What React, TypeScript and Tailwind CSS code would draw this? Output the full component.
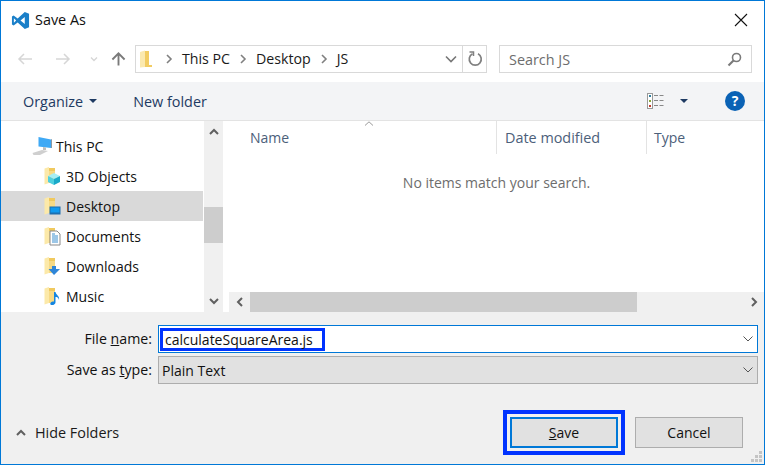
import React from "react";

const font = "font-['Open_Sans','Noto_Sans',sans-serif]";

function Folder({ children }: { children?: React.ReactNode }) {
  return (
    <svg width="18" height="20" viewBox="0 0 18 20" className="shrink-0">
      <path d="M5 2 L11 2 L11 17 L5 17 Z" fill="#f0c95e" />
      <path d="M0.5 2.5 L5 1 L5 17 L0.5 18.5 Z" fill="#fce9a9" />
      <path d="M5 5 L11 5 L11 17 L5 17 Z" fill="#f7da85" />
      {children}
    </svg>
  );
}

const treeIcons: Record<string, React.ReactNode> = {
  "3D Objects": (
    <>
      <path d="M4 10 L10 7 L16 10 L10 13 Z" fill="#a6eef4" />
      <path d="M4 10 L10 13 L10 19 L4 16 Z" fill="#4fd0df" />
      <path d="M16 10 L10 13 L10 19 L16 16 Z" fill="#1aa9c9" />
    </>
  ),
  Desktop: (
    <>
      <rect x="5.5" y="10.5" width="11" height="8" fill="#1c6fb0" />
      <rect x="6.5" y="11.5" width="9" height="5" fill="#0f9af0" />
    </>
  ),
  Documents: (
    <>
      <path d="M6 5 L13 5 L16 8 L16 19 L6 19 Z" fill="#fff" stroke="#8a8a8a" />
      <path d="M8 8h3M8 10h6M8 12h6M8 14h6M8 16h6" stroke="#3a8fd0" strokeWidth="1" />
    </>
  ),
  Downloads: <path d="M8 10 L12 10 L12 13 L16 13 L10 19 L4.5 13 L8 13 Z" fill="#2f86d8" />,
  Music: (
    <path d="M10 6 L11.5 6 C12 9 16 10 15 14 C14.5 11.5 13 11 11.5 11 L11.5 16.5 C11.5 18.5 8 20 6.5 18.5 C5.5 17 8 15 10 15.5 Z" fill="#1485e0" />
  ),
};

function TreeRow({ label, selected }: { label: string; selected?: boolean }) {
  return (
    <div className={`flex h-[30px] items-center pl-[43px] ${selected ? "bg-[#d9d9d9]" : ""}`}>
      <Folder>{treeIcons[label]}</Folder>
      <span className="ml-[4px] text-[14px] text-[#111]">{label}</span>
    </div>
  );
}

function Chevron({ dir, className }: { dir: "up" | "down" | "left" | "right"; className?: string }) {
  const d = {
    up: "M2 8 L6 4 L10 8",
    down: "M2 4 L6 8 L10 4",
    left: "M8 2 L4 6 L8 10",
    right: "M4 2 L8 6 L4 10",
  }[dir];
  return (
    <svg width="12" height="12" viewBox="0 0 12 12" className={className}>
      <path d={d} fill="none" stroke="#606060" strokeWidth="2" />
    </svg>
  );
}

function Crumb({ label }: { label: string }) {
  return (
    <>
      <svg width="8" height="10" viewBox="0 0 8 10" className="shrink-0">
        <path d="M2 1 L6 5 L2 9" fill="none" stroke="#808080" strokeWidth="1.6" />
      </svg>
      <span className="text-[14.2px] text-[#1a1a1a]">{label}</span>
    </>
  );
}

function ThinDown() {
  return (
    <svg width="12" height="8" viewBox="0 0 12 8" className="shrink-0">
      <path d="M1.5 1.5 L6 6 L10.5 1.5" fill="none" stroke="#555" strokeWidth="1" />
    </svg>
  );
}

export default function App() {
  return (
    <div className={`${font} relative flex h-[465px] w-[765px] flex-col overflow-hidden border border-[#0078d7] bg-white`}>
      {/* title bar */}
      <div className="flex h-[38px] shrink-0 items-center pl-[10px] pr-[16px]">
        <svg width="19" height="19" viewBox="0 0 20 20" className="shrink-0">
          <path d="M14.5 1 L19 3 L19 17 L14.5 19 L7 12 L2.8 15.2 L1 14.2 L1 5.8 L2.8 4.8 L7 8 Z" fill="#1a7fc8" />
          <path d="M14.5 6.3 L10 10 L14.5 13.7 Z" fill="#fff" />
          <path d="M3 7.6 L3 12.4 L5.4 10 Z" fill="#fff" />
        </svg>
        <span className="ml-[5px] text-[14.4px] text-[#111]">Save As</span>
        <svg width="14" height="14" viewBox="0 0 14 14" className="ml-auto">
          <path d="M1 1 L13 13 M13 1 L1 13" stroke="#111" strokeWidth="1.1" />
        </svg>
      </div>

      {/* nav row */}
      <div className="mt-[6px] flex h-[28px] shrink-0 items-center">
        <div className="flex w-[134px] shrink-0 items-center pl-[16px]">
          <svg width="15" height="12" viewBox="0 0 15 12">
            <path d="M15 6 L2 6 M7 1 L2 6 L7 11" fill="none" stroke="#d6d6d6" strokeWidth="1.5" />
          </svg>
          <svg width="15" height="12" viewBox="0 0 15 12" className="ml-[24px]">
            <path d="M0 6 L13 6 M8 1 L13 6 L8 11" fill="none" stroke="#d6d6d6" strokeWidth="1.5" />
          </svg>
          <svg width="8" height="6" viewBox="0 0 10 8" className="ml-[19px]">
            <path d="M1 2 L5 6 L9 2" fill="none" stroke="#d6d6d6" strokeWidth="1.8" />
          </svg>
          <svg width="15" height="16" viewBox="0 0 16 16" className="ml-[13px]">
            <path d="M8 15 L8 2 M1.5 8.5 L8 2 L14.5 8.5" fill="none" stroke="#7a7a7a" strokeWidth="2" />
          </svg>
        </div>
        <div className="flex h-full w-[352px] shrink-0 items-center border-[1.5px] border-[#d9d9d9] pl-[4px]">
          <svg width="14" height="18" viewBox="0 0 14 18" className="shrink-0">
            <path d="M0 2 L5 0.5 L5 17 L0 17.5 Z" fill="#fbe9ae" />
            <path d="M5 1 L9 1 L9 15 L12 15 L12 17 L5 17 Z" fill="#f2cc62" />
          </svg>
          <div className="ml-[11px] flex items-center gap-[9px]">
            <Crumb label="This PC" />
            <Crumb label="Desktop" />
            <Crumb label="JS" />
          </div>
          <svg width="12" height="8" viewBox="0 0 12 8" className="ml-auto mr-[5px]">
            <path d="M1 1.5 L6 6.5 L11 1.5" fill="none" stroke="#777" strokeWidth="1.6" />
          </svg>
          <div className="flex h-full w-[24px] shrink-0 items-center justify-center border-l border-[#d9d9d9]">
            <svg width="16" height="16" viewBox="0 0 16 16">
              <path d="M5.5 2.8 A6 6 0 1 0 11 2.8" fill="none" stroke="#808080" strokeWidth="1.7" />
              <path d="M2.5 1 L6.5 1 L6.5 5" fill="none" stroke="#808080" strokeWidth="1.5" />
            </svg>
          </div>
        </div>
        <div className="ml-[12px] flex h-full w-[253px] shrink-0 items-center justify-between border-[1.5px] border-[#d9d9d9] pl-[9px] pr-[9px]">
          <span className="pt-[1px] text-[14.4px] text-[#6d6d6d]">Search JS</span>
          <svg width="15" height="15" viewBox="0 0 15 15">
            <circle cx="9.5" cy="5.5" r="4" fill="none" stroke="#7a7a7a" strokeWidth="1.6" />
            <path d="M6.5 8.5 L1.5 13.5" stroke="#7a7a7a" strokeWidth="2.2" />
          </svg>
        </div>
      </div>

      {/* toolbar */}
      <div className="mt-[9px] flex h-[39px] shrink-0 items-center border-b border-[#e3e3e3] bg-[#f3f4f6] pl-[22px] pr-[19px]">
        <span className="pt-[1px] text-[14.4px] text-[#1e3a62]">Organize</span>
        <svg width="8" height="4" viewBox="0 0 8 4" className="ml-[6px]">
          <path d="M0 0 L8 0 L4 4 Z" fill="#1e3a62" />
        </svg>
        <span className="ml-[36px] pt-[1px] text-[14.4px] text-[#1e3a62]">New folder</span>
        <svg width="19" height="16" viewBox="0 0 19 16" className="ml-auto">
          <rect x="0.5" y="0.5" width="5" height="15" fill="#fff" stroke="#999" />
          <rect x="2" y="2" width="2" height="2" fill="#2f7f9f" />
          <rect x="2" y="7" width="2" height="2" fill="#8aa83a" />
          <rect x="2" y="12" width="2" height="2" fill="#c0392b" />
          <path d="M7 2.5h11M7 7.5h11M7 12.5h11" stroke="#888" strokeDasharray="4 1.5" />
        </svg>
        <svg width="8" height="4" viewBox="0 0 8 4" className="ml-[14px]">
          <path d="M0 0 L8 0 L4 4 Z" fill="#1e3a62" />
        </svg>
        <div className="ml-[37px] flex h-[20px] w-[20px] items-center justify-center rounded-full bg-[#0a62b5] text-[14px] font-bold leading-none text-white">
          ?
        </div>
      </div>

      {/* browser */}
      <div className="flex h-[191px] shrink-0">
        <div className="w-[202px] shrink-0 overflow-hidden pt-[10px]">
          <div className="flex h-[30px] items-center pl-[31px]">
            <svg width="24" height="20" viewBox="0 0 24 20" className="shrink-0">
              <path d="M6.5 1 L19 3.5 L19 12 L6.5 10.5 Z" fill="#3fa9f5" />
              <path d="M19 3.5 L20 3 L20 12 L19 12 Z" fill="#8a98a4" />
              <path d="M0.5 17 L10 14 L16 15 L8 19 L1.5 19 Z" fill="#cfcfcf" />
              <path d="M11 11 L14 11.5 L14 14 L11 14 Z" fill="#bcbcbc" />
            </svg>
            <span className="text-[14px] text-[#111]">This PC</span>
          </div>
          <TreeRow label="3D Objects" />
          <TreeRow label="Desktop" selected />
          <TreeRow label="Documents" />
          <TreeRow label="Downloads" />
          <TreeRow label="Music" />
        </div>
        <div className="relative ml-[1px] flex w-[19px] shrink-0 flex-col items-center justify-between bg-[#f0f0f0] py-[5px]">
          <Chevron dir="up" />
          <div className="absolute left-0 top-[86px] h-[36px] w-[19px] bg-[#cdcdcd]" />
          <Chevron dir="down" />
        </div>
        <div className="relative ml-[6px] flex min-w-0 flex-1 flex-col">
          <div className="flex h-[33px] shrink-0 items-center">
            <div className="flex h-full w-[268px] shrink-0 items-center border-r border-[#e3e3e3] pl-[21px]">
              <span className="text-[14px] text-[#4c607a]">Name</span>
            </div>
            <div className="flex h-full w-[150px] shrink-0 items-center border-r border-[#e3e3e3] pl-[8px]">
              <span className="text-[14.4px] text-[#4c607a]">Date modified</span>
            </div>
            <span className="pl-[7px] text-[14px] text-[#4c607a]">Type</span>
            <svg width="10" height="5" viewBox="0 0 10 5" className="absolute left-[135px] top-0">
              <path d="M1 4.5 L5 0.8 L9 4.5" fill="none" stroke="#9a9a9a" />
            </svg>
          </div>
          <div className="flex-1 pt-[18px] text-center text-[14px] text-[#6d6d6d]">
            No items match your search.
          </div>
          <div className="flex h-[20px] shrink-0 items-center bg-[#f0f0f0]">
            <div className="flex w-[21px] shrink-0 justify-center">
              <Chevron dir="left" />
            </div>
            <div className="h-full w-[387px] shrink-0 bg-[#cdcdcd]" />
            <Chevron dir="right" className="ml-auto mr-[4px]" />
          </div>
        </div>
      </div>

      {/* footer */}
      <div className="relative flex min-h-0 flex-1 flex-col bg-[#f0f0f0] pr-[6px]">
        <div className="mt-[13px] flex items-center">
          <label className="w-[151px] shrink-0 text-right text-[14.2px] text-[#111]">
            File <span className="underline">n</span>ame:
          </label>
          <div className="ml-[6px] flex h-[28px] flex-1 items-center justify-end border border-[#0078d7] bg-white pr-[3px]">
            <ThinDown />
          </div>
        </div>
        <div className="mt-[3px] flex items-center">
          <label className="w-[151px] shrink-0 text-right text-[14.2px] text-[#111]">
            Save as <span className="underline">t</span>ype:
          </label>
          <div className="ml-[6px] flex h-[28px] flex-1 items-center justify-between border border-[#adadad] bg-[#e1e1e1] pl-[3px] pr-[3px]">
            <span className="text-[14px] text-[#111]">Plain Text</span>
            <ThinDown />
          </div>
        </div>
        <div className="absolute left-[159px] top-[16px] flex h-[23px] w-[165px] items-center border-[3px] border-[#0033ff] pl-[2px] text-[14px] text-[#111]">
          calculateSquareArea.js
        </div>

        <div className="mt-auto flex h-[47px] items-start pl-[14px]">
          <div className="flex h-[31px] items-center">
            <Chevron dir="up" />
            <span className="ml-[8px] text-[14.4px] text-[#1a1a1a]">Hide Folders</span>
          </div>
          <button className="ml-auto h-[31px] w-[108px] border-2 border-[#0078d7] bg-[#e1e1e1] text-[14px] text-[#111] outline-[4px] outline-offset-[3px] outline-[#0033ff]">
            <span className="underline">S</span>ave
          </button>
          <button className="ml-[17px] mr-[15px] h-[31px] w-[108px] border border-[#adadad] bg-[#e1e1e1] text-[14px] text-[#111]">
            Cancel
          </button>
        </div>
        <svg width="12" height="11" viewBox="0 0 12 11" className="absolute bottom-[2px] right-[1px]">
          <path d="M8 0h3v3H8zM4 4h3v3H4zM8 4h3v3H8zM0 8h3v3H0zM4 8h3v3H4zM8 8h3v3H8z" fill="#c4c4c4" />
        </svg>
      </div>
    </div>
  );
}
